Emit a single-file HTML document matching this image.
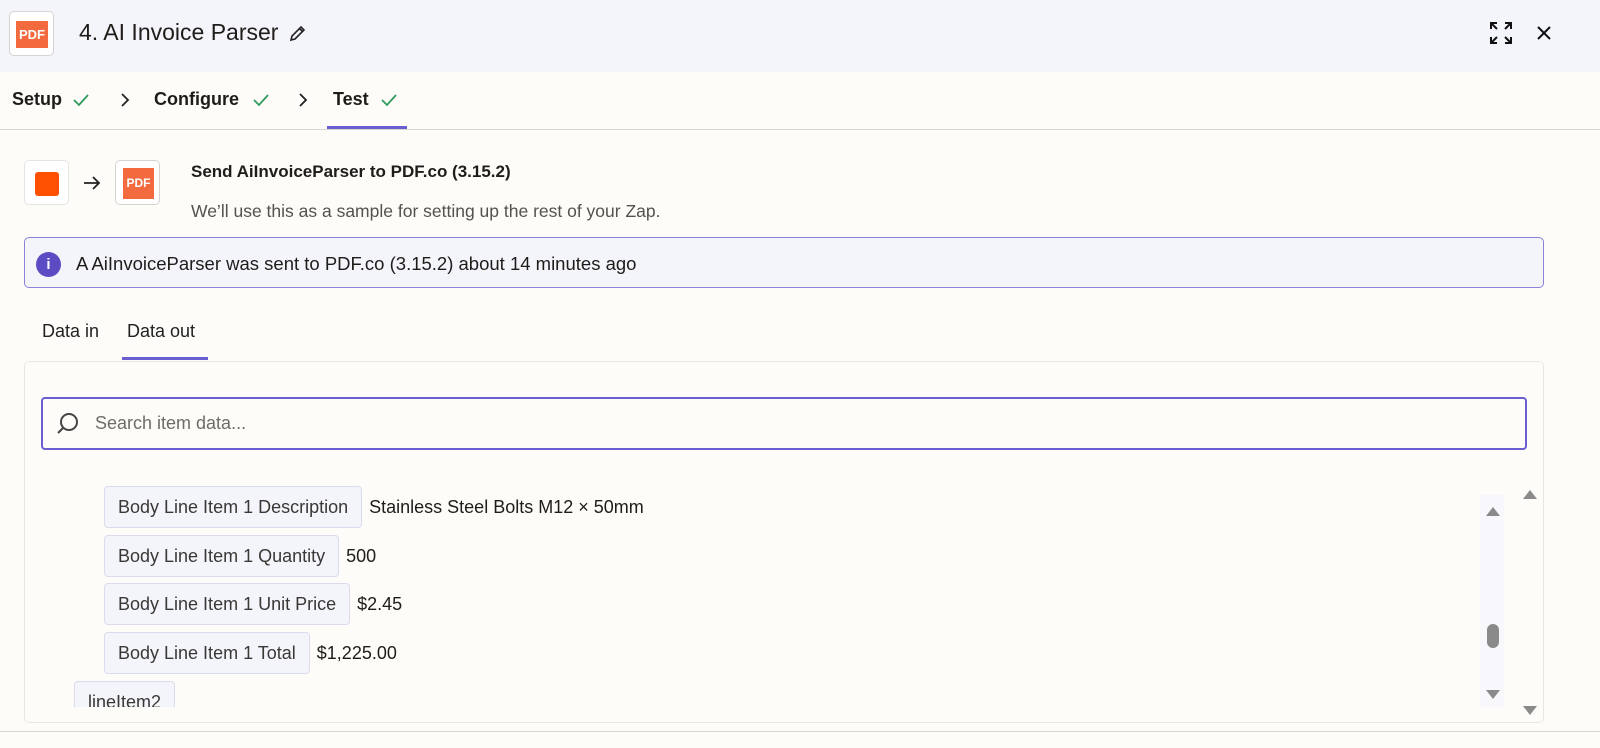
<!DOCTYPE html>
<html><head><meta charset="utf-8"><style>
*{box-sizing:border-box;margin:0;padding:0}
body{width:1600px;height:748px;overflow:hidden;background:#fdfcf9;font-family:"Liberation Sans",sans-serif;color:#1f1d1a;position:relative}
.hdr{position:absolute;left:0;top:0;width:1600px;height:72px;background:#f4f4fb}
.logo{position:absolute;border:1px solid #d6d4d0;border-radius:5px;background:#fff}
.pdf{position:absolute;background:#f26a3d;color:#fff;font-weight:bold;font-size:13px;text-align:center}
.abs{position:absolute;white-space:nowrap}
.row{position:absolute;display:flex;align-items:center;gap:7px;height:42px;white-space:nowrap}
.chip{height:42px;border:1px solid #dcdbee;background:#f4f4fb;border-radius:4px;font-size:18px;color:#3a3835;padding:0 13px;line-height:40px;white-space:nowrap}
.val{font-size:18px;white-space:nowrap}
.tri{position:absolute;width:0;height:0;border-left:7px solid transparent;border-right:7px solid transparent}
</style></head><body>
<div class="hdr"></div>
<div class="logo" style="left:9px;top:11px;width:45px;height:45px"><div class="pdf" style="left:6px;top:9px;width:32px;height:27px;line-height:27px">PDF</div></div>
<div class="abs" style="left:79px;top:19px;font-size:23px">4. AI Invoice Parser</div>
<svg class="abs" style="left:289px;top:24px" width="18" height="18" viewBox="0 0 18 18" fill="none" stroke="#222" stroke-width="1.6"><path d="M2 16l1-4L12 3l3 3-9 9z M10.5 4.5l3 3"/></svg>
<svg class="abs" style="left:1489px;top:21px" width="24" height="24" viewBox="0 0 24 24" fill="none" stroke="#111" stroke-width="2"><path d="M2 8V2h6M2 2l6 6M16 2h6v6M22 2l-6 6M2 16v6h6M2 22l6-6M22 16v6h-6M22 22l-6-6"/></svg>
<svg class="abs" style="left:1536px;top:25px" width="16" height="16" viewBox="0 0 16 16" stroke="#111" stroke-width="2"><path d="M2 2l12 12M14 2L2 14"/></svg>

<div class="abs" style="left:12px;top:89px;font-size:18px;font-weight:bold">Setup</div>
<svg class="abs" style="left:72px;top:93px" width="18" height="14" viewBox="0 0 18 14" fill="none" stroke="#2f9a5a" stroke-width="1.8"><path d="M2 7l5 5 9-10"/></svg>
<svg class="abs" style="left:120px;top:92px" width="10" height="16" viewBox="0 0 10 16" fill="none" stroke="#222" stroke-width="1.8"><path d="M2 2l6 6-6 6"/></svg>
<div class="abs" style="left:154px;top:89px;font-size:18px;font-weight:bold">Configure</div>
<svg class="abs" style="left:252px;top:93px" width="18" height="14" viewBox="0 0 18 14" fill="none" stroke="#2f9a5a" stroke-width="1.8"><path d="M2 7l5 5 9-10"/></svg>
<svg class="abs" style="left:298px;top:92px" width="10" height="16" viewBox="0 0 10 16" fill="none" stroke="#222" stroke-width="1.8"><path d="M2 2l6 6-6 6"/></svg>
<div class="abs" style="left:333px;top:89px;font-size:18px;font-weight:bold">Test</div>
<svg class="abs" style="left:380px;top:93px" width="18" height="14" viewBox="0 0 18 14" fill="none" stroke="#2f9a5a" stroke-width="1.8"><path d="M2 7l5 5 9-10"/></svg>
<div class="abs" style="left:327px;top:126px;width:80px;height:3px;background:#6a5fd0"></div>
<div class="abs" style="left:0;top:129px;width:1600px;height:1px;background:#d8d6d2"></div>

<div class="logo" style="left:24px;top:160px;width:45px;height:45px;border-color:#e6e4e0"><div style="position:absolute;left:10px;top:11px;width:24px;height:24px;background:#ff4f00;border-radius:3px"></div></div>
<svg class="abs" style="left:82px;top:175px" width="20" height="16" viewBox="0 0 20 16" fill="none" stroke="#222" stroke-width="1.8"><path d="M2 8h15M11 2l6 6-6 6"/></svg>
<div class="logo" style="left:115px;top:160px;width:45px;height:45px"><div class="pdf" style="left:7px;top:7px;width:31px;height:31px;line-height:31px;font-size:12px">PDF</div></div>
<div class="abs" style="left:191px;top:162px;font-size:17px;font-weight:bold">Send AiInvoiceParser to PDF.co (3.15.2)</div>
<div class="abs" style="left:191px;top:201px;font-size:17.5px;color:#55524e">We’ll use this as a sample for setting up the rest of your Zap.</div>

<div class="abs" style="left:24px;top:237px;width:1520px;height:51px;border:1px solid #8a82d8;background:#f4f4fb;border-radius:5px"></div>
<div class="abs" style="left:36px;top:252px;width:25px;height:25px;border-radius:50%;background:#5b4cc4;color:#fff;font-weight:bold;font-size:15px;text-align:center;line-height:25px">i</div>
<div class="abs" style="left:76px;top:253px;font-size:18.5px">A AiInvoiceParser was sent to PDF.co (3.15.2) about 14 minutes ago</div>

<div class="abs" style="left:42px;top:321px;font-size:18px;color:#222">Data in</div>
<div class="abs" style="left:127px;top:321px;font-size:18px;color:#222">Data out</div>
<div class="abs" style="left:122px;top:357px;width:86px;height:3px;background:#6a5fd0"></div>

<div class="abs" style="left:24px;top:361px;width:1520px;height:362px;border:1px solid #e9e7e3;border-radius:5px"></div>
<div class="abs" style="left:41px;top:397px;width:1486px;height:53px;border:2px solid #6a5fd0;border-radius:4px;background:#fdfcf9"></div>
<svg class="abs" style="left:55px;top:411px" width="26" height="26" viewBox="0 0 26 26" fill="none" stroke="#444" stroke-width="2"><circle cx="14" cy="11" r="8"/><path d="M8 17l-5 5"/></svg>
<div class="abs" style="left:95px;top:413px;font-size:18px;color:#6f6c68">Search item data...</div>

<div style="position:absolute;left:26px;top:483px;width:1450px;height:224px;overflow:hidden">
<div class="row" style="left:78px;top:3px"><div class="chip">Body Line Item 1 Description</div><span class="val">Stainless Steel Bolts M12 × 50mm</span></div>
<div class="row" style="left:78px;top:52px"><div class="chip">Body Line Item 1 Quantity</div><span class="val">500</span></div>
<div class="row" style="left:78px;top:100px"><div class="chip">Body Line Item 1 Unit Price</div><span class="val">$2.45</span></div>
<div class="row" style="left:78px;top:149px"><div class="chip">Body Line Item 1 Total</div><span class="val">$1,225.00</span></div>
<div class="row" style="left:48px;top:198px"><div class="chip">lineItem2</div></div>
</div>
<div class="abs" style="left:1480px;top:495px;width:24px;height:212px;background:#f7f7fc"></div>
<div class="tri" style="left:1486px;top:507px;border-bottom:9px solid #8a8a8a"></div>
<div class="abs" style="left:1487px;top:624px;width:12px;height:24px;border-radius:6px;background:#8a8a8a"></div>
<div class="tri" style="left:1486px;top:690px;border-top:9px solid #8a8a8a"></div>
<div class="tri" style="left:1523px;top:490px;border-bottom:9px solid #8a8a8a"></div>
<div class="tri" style="left:1523px;top:706px;border-top:9px solid #8a8a8a"></div>
<div class="abs" style="left:0;top:731px;width:1600px;height:1px;background:#d8d6d2"></div>
</body></html>
